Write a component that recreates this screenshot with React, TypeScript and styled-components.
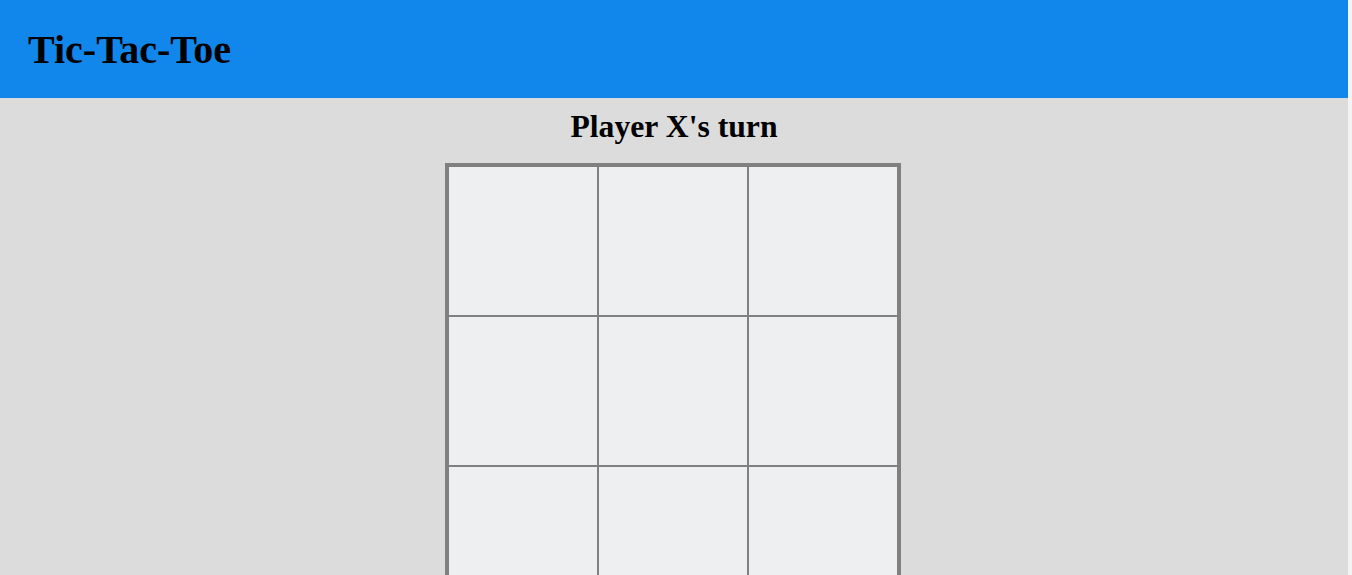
import React, { useState } from "react";
import styled, { createGlobalStyle } from "styled-components";

const GlobalStyle = createGlobalStyle`
  html {
    background: #f3f3f3;
  }
  body {
    margin: 0 4px 0 0;
    background: #dcdcdc;
    font-family: "Liberation Serif", "Times New Roman", serif;
  }
`;

const Header = styled.header`
  height: 98px;
  background: #1186eb;
  display: flex;
  align-items: center;
  padding: 0 28px;
  box-sizing: border-box;
`;

const Title = styled.h1`
  margin: 0;
  font-size: 40px;
  font-weight: bold;
  color: #000;
`;

const Main = styled.main`
  display: flex;
  flex-direction: column;
  align-items: center;
  padding-top: 11px;
  padding-bottom: 20px;
`;

const Status = styled.h2`
  margin: 0 0 18px;
  font-size: 31.7px;
  font-weight: bold;
  color: #000;
  line-height: 36px;
`;

const Board = styled.div`
  display: grid;
  grid-template-columns: repeat(3, 150px);
  grid-template-rows: repeat(3, 150px);
  border: 3px solid #808080;
  margin-right: 2px;
`;

const Cell = styled.button`
  width: 150px;
  height: 150px;
  box-sizing: border-box;
  border: 1px solid #808080;
  background: #eeeff1;
  padding: 0;
  margin: 0;
  font-family: "Liberation Serif", "Times New Roman", serif;
  font-size: 72px;
  font-weight: bold;
  cursor: pointer;
`;

export default function App() {
  const [cells, setCells] = useState<(string | null)[]>(Array(9).fill(null));
  const [xTurn, setXTurn] = useState(true);

  const play = (i: number) => {
    if (cells[i]) return;
    const next = cells.slice();
    next[i] = xTurn ? "X" : "O";
    setCells(next);
    setXTurn(!xTurn);
  };

  return (
    <>
      <GlobalStyle />
      <Header>
        <Title>Tic-Tac-Toe</Title>
      </Header>
      <Main>
        <Status>Player {xTurn ? "X" : "O"}'s turn</Status>
        <Board>
          {cells.map((c, i) => (
            <Cell key={i} onClick={() => play(i)}>
              {c}
            </Cell>
          ))}
        </Board>
      </Main>
    </>
  );
}
